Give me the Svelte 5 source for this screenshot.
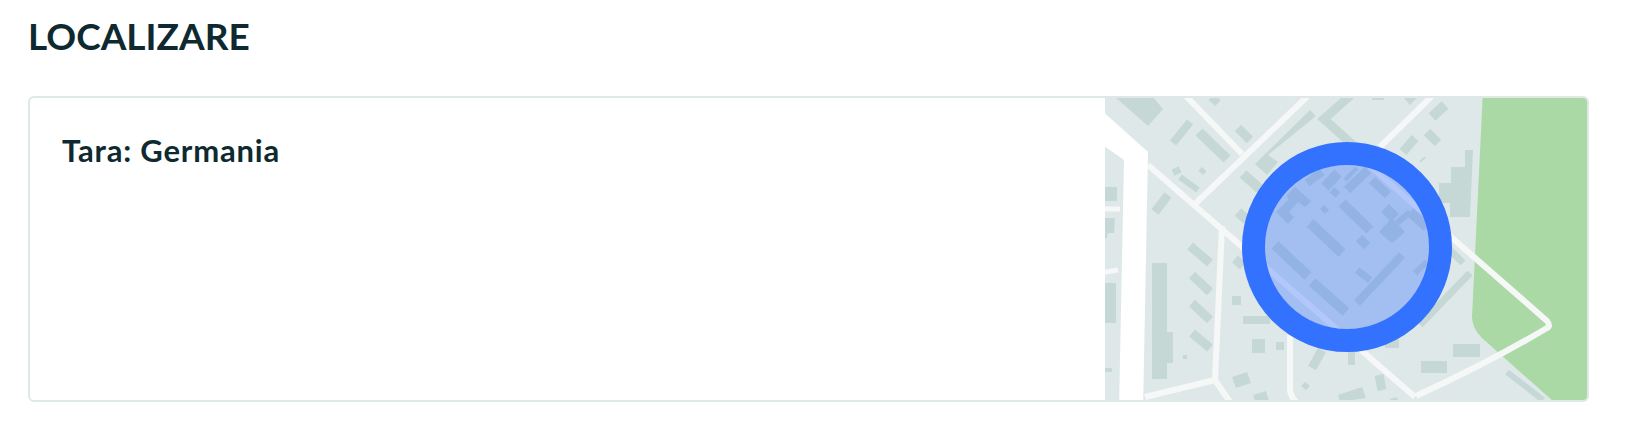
<script>
  const roads = [
    ['M1184 94L1242 154', 6],
    ['M1312 92L1195 204', 6],
    ['M1148 165L1415 397', 6],
    ['M1222 226L1215 380L1145 397', 6],
    ['M1215 380L1230 402', 6],
    ['M1105 209L1120 209', 5],
    ['M1105 272L1118 270', 5],
    ['M1290 335V388Q1290 396 1296 402', 6],
    ['M1380 147L1434 94', 6],
    ['M1370 166L1547 321Q1551 326 1547 328Q1490 362 1416 396', 6]
  ];
  const bars = [
    [1190,122,1173,143,8],[1199,132,1227,159,10],[1238,128,1250,140,9],[1211,97,1218,103,8],
    [1175,168,1178,174,8],[1180,177,1198,190,6],[1200,169,1205,173,5],[1168,195,1155,212,9],
    [1243,174,1260,189,10],[1238,212,1247,220,10],[1190,246,1210,263,9],
    [1192,275,1210,292,9],[1192,303,1210,320,9],[1192,333,1210,348,9],
    [1235,259,1243,266,9],[1307,183,1322,172,8],[1325,187,1338,173,10],[1347,190,1368,170,9],
    [1345,180,1357,168,4],[1332,190,1338,195,7],[1372,180,1388,195,9],[1322,207,1327,212,6],
    [1342,203,1370,230,10],[1385,208,1395,218,11],[1397,223,1410,212,6],[1410,212,1427,227,10],
    [1359,238,1367,246,9],[1310,223,1342,253,10],[1275,245,1308,276,10],[1357,270,1370,280,7],
    [1402,255,1357,303,8],[1312,282,1346,312,10],[1415,273,1427,262,6],[1470,273,1420,325,7],
    [1445,245,1463,263,7],[1322,350,1312,368,9],[1432,117,1445,105,10],[1427,132,1438,143,9],
    [1420,162,1425,157,2],[1403,152,1415,138,9],[1507,372,1543,400,6],
    [1379,375,1382,390,9],[1303,384,1308,388,6]
  ];
  const rects = [
    [1105,187,12,14],[1105,283,11,40],[1105,368,7,4],[1232,296,9,9],[1243,316,27,8],
    [1252,339,13,14],[1276,342,8,8],[1183,355,4,4],[1385,320,14,28],[1348,350,7,15],
    [1453,344,27,13],[1421,361,26,12],[1372,97,12,3]
  ];
  const polys = [
    '1115,97 1153,97 1163,109 1148,126',
    '1105,218 1115,218 1114,233 1108,233 1107,238 1105,238',
    '1152,263 1167,263 1167,332 1173,332 1173,363 1167,363 1167,379 1152,379',
    '1232,377 1247,372 1251,383 1236,388',
    '1253,395 1266,391 1269,401 1255,401',
    '1338,395 1362,387 1366,398 1340,402',
    '1390,399 1397,397 1398,401 1390,401',
    '1403,97 1418,97 1410,105',
    '1310,110 1255,164 1267,175 1278,162 1268,155 1316,116',
    '1295,187 1311,201 1305,207 1298,202 1289,212 1294,217 1288,224 1276,212 1288,200 1287,195',
    '1392,218 1405,232 1392,243 1379,232',
    '1465,150 1473,150 1470,217 1450,217 1450,203 1439,203 1439,183 1451,183 1451,167 1465,167'
  ];
</script>

<main class="page">
  <h2 class="title">LOCALIZARE</h2>
  <section class="card">
    <div class="info">
      <p class="country">Tara: Germania</p>
    </div>
    <svg class="map" viewBox="1104 98 483 302" aria-hidden="true">
      <g class="soft">
        <rect x="1105" y="90" width="490" height="320" fill="#dfe8e9" />
        <path d="M1483 90H1595V410H1563L1482 338Q1472 328 1472 317Z" fill="#abd9a5" />
        <g fill="#c5d8d6">
          {#each rects as r}
            <rect x={r[0]} y={r[1]} width={r[2]} height={r[3]} />
          {/each}
          {#each polys as p}
            <polygon points={p} />
          {/each}
        </g>
        <g stroke="#c5d8d6" fill="none">
          {#each bars as b}
            <line x1={b[0]} y1={b[1]} x2={b[2]} y2={b[3]} stroke-width={b[4]} />
          {/each}
          <path d="M1352 94L1324 119L1354 146" stroke-width="9" />
        </g>
        <g stroke="#f6f7f7" fill="none" stroke-linejoin="round">
          {#each roads as r}
            <path d={r[0]} stroke-width={r[1]} />
          {/each}
        </g>
        <path d="M1100 109L1148 152L1143 410H1119L1124 160L1100 143Z" fill="#fff" />
      </g>
      <circle cx="1347" cy="247" r="93.5" fill="#3371ff" fill-opacity="0.35" stroke="#3371ff" stroke-width="23" />
    </svg>
  </section>
</main>

<style>
  :global(body) {
    margin: 0;
    background: #fff;
  }
  .page {
    padding: 13px 37px 0 28px;
    font-family: "Lato", "Open Sans", sans-serif;
    color: #0e2a30;
  }
  .title {
    margin: 0 0 38px;
    font-size: 37px;
    line-height: 45px;
    font-weight: 700;
  }
  .card {
    display: flex;
    height: 306px;
    border: 2px solid #dfe8e6;
    border-radius: 6px;
    overflow: hidden;
    box-sizing: border-box;
  }
  .info {
    flex: 1;
    padding: 33px 32px;
  }
  .country {
    margin: 0;
    font-size: 31px;
    line-height: 38px;
    font-weight: 700;
    letter-spacing: 0.8px;
  }
  .map {
    display: block;
    width: 483px;
    height: 302px;
    flex: none;
  }
  .soft {
    filter: blur(0.5px);
  }
</style>
